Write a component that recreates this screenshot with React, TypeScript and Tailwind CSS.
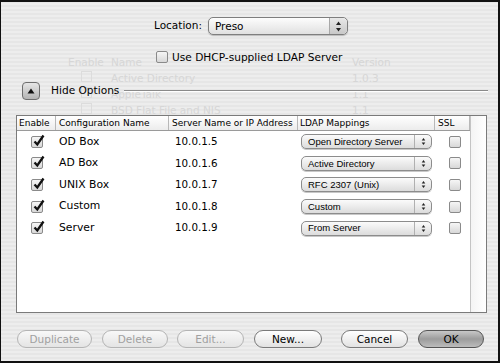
import React from "react";

const font = "font-['DejaVu_Sans','Liberation_Sans',sans-serif]";

const rows = [
  { name: "OD Box", ip: "10.0.1.5", map: "Open Directory Server" },
  { name: "AD Box", ip: "10.0.1.6", map: "Active Directory" },
  { name: "UNIX Box", ip: "10.0.1.7", map: "RFC 2307 (Unix)" },
  { name: "Custom", ip: "10.0.1.8", map: "Custom" },
  { name: "Server", ip: "10.0.1.9", map: "From Server" },
];

const Arrows = ({ size = 7 }: { size?: number }) => (
  <svg width={size} height={size + 4} viewBox="0 0 7 11">
    <path d="M3.5 0.5 L6 4 L1 4 Z" fill="#222" />
    <path d="M3.5 10.5 L6 7 L1 7 Z" fill="#222" />
  </svg>
);

const CheckBox = ({ checked }: { checked?: boolean }) => (
  <div className="relative h-[12px] w-[12px] rounded-[2px] border border-[#8a8a8a] bg-gradient-to-b from-[#f6f6f6] to-[#d8d8d8]">
    {checked && (
      <svg
        className="absolute left-[1px] top-[-3px]"
        width="12"
        height="13"
        viewBox="0 0 12 13"
      >
        <path
          d="M1.5 7.5 L4.3 10.5 L10.5 1.5"
          stroke="#111"
          strokeWidth="2.3"
          fill="none"
        />
      </svg>
    )}
  </div>
);

const MiniPopup = ({ label }: { label: string }) => (
  <div className="flex h-[15px] w-[131px] items-center rounded-[5px] border border-[#8c8c8c] bg-gradient-to-b from-[#fbfbfb] to-[#dcdcdc] shadow-[0_1px_0_#c8c8c8]">
    <span className="flex-1 whitespace-nowrap pl-[6px] font-['Liberation_Sans',sans-serif] text-[9.5px] leading-none text-black">
      {label}
    </span>
    <div className="flex h-full w-[17px] items-center justify-center border-l border-[#b0b0b0]">
      <Arrows size={5} />
    </div>
  </div>
);

const Pill = ({
  label,
  w,
  disabled,
  primary,
}: {
  label: string;
  w: string;
  disabled?: boolean;
  primary?: boolean;
}) => (
  <div
    className={`flex h-[18px] ${w} items-center justify-center whitespace-nowrap rounded-full border text-[10.5px] leading-none ${
      primary
        ? "border-[#555] bg-gradient-to-b from-[#c8c8c8] via-[#9c9c9c] to-[#bcbcbc] text-black"
        : disabled
        ? "border-[#b4b4b4] bg-gradient-to-b from-[#f8f8f8] to-[#e4e4e4] text-[#a0a0a0]"
        : "border-[#7a7a7a] bg-gradient-to-b from-[#ffffff] to-[#e2e2e2] text-black"
    }`}
  >
    {label}
  </div>
);

export default function App() {
  return (
    <div
      className={`${font} relative h-[363px] w-[500px] overflow-hidden border-t-2 border-l border-r-2 border-b-2 border-[#111] bg-[repeating-linear-gradient(0deg,#ededed_0px,#ededed_2px,#e6e6e6_2px,#e6e6e6_4px)] text-black`}
    >
      {/* faint window content behind the sheet */}
      <div className="pointer-events-none absolute left-[67px] top-[53px] w-[340px] whitespace-nowrap text-[10.5px] text-[#d6d6d6]">
        <div className="flex h-[16px] items-center">
          <span className="w-[43px]">Enable</span>
          <span className="w-[241px]">Name</span>
          <span>Version</span>
        </div>
        {["Active Directory", "AppleTalk", "BSD Flat File and NIS"].map(
          (n, i) => (
            <div key={n} className="flex h-[16px] items-center">
              <span className="w-[43px] pl-[13px]">
                <span className="inline-block h-[11px] w-[11px] border border-[#dcdcdc]" />
              </span>
              <span className="w-[241px]">{n}</span>
              <span>{i === 0 ? "1.0.3" : "1.1"}</span>
            </div>
          )
        )}
      </div>

      <div className="relative flex flex-col whitespace-nowrap">
        {/* Location */}
        <div className="mt-[15px] flex h-[18px] items-center">
          <span className="ml-[153px] mr-[6px] text-[10.5px]">Location:</span>
          <div className="flex h-[18px] w-[140px] items-center rounded-[5px] border border-[#7e7e7e] bg-gradient-to-b from-[#fdfdfd] to-[#e0e0e0] shadow-[0_1px_1px_#bbb]">
            <span className="flex-1 pl-[6px] text-[10.5px] leading-none">Preso</span>
            <div className="flex h-full w-[18px] items-center justify-center rounded-r-[5px] border-l border-[#a8a8a8] bg-gradient-to-b from-[#e8e8e8] to-[#c8c8c8]">
              <Arrows />
            </div>
          </div>
        </div>

        {/* DHCP */}
        <div className="mt-[15px] flex h-[14px] items-center">
          <div className="ml-[155px]">
            <CheckBox />
          </div>
          <span className="ml-[4px] text-[10.6px] leading-none">
            Use DHCP-supplied LDAP Server
          </span>
        </div>

        {/* Hide options */}
        <div className="mt-[18px] flex h-[18px] items-center pl-[21px] pr-[10px]">
          <div className="flex h-[18px] w-[18px] items-center justify-center rounded-[4px] border border-[#6e6e6e] bg-gradient-to-b from-[#e6e6e6] to-[#b4b4b4]">
            <svg width="8" height="6" viewBox="0 0 8 6">
              <path d="M4 0.5 L7.5 5.5 L0.5 5.5 Z" fill="#111" />
            </svg>
          </div>
          <span className="ml-[11px] text-[10.6px]">Hide Options</span>
          <div className="ml-[5px] h-[2px] flex-1 border-t border-b border-t-[#8a8a8a] border-b-white" />
        </div>

        {/* table */}
        <div className="ml-[15px] mt-[15px] flex h-[198px] w-[471px] border border-[#7a7a7a] bg-white">
          <div className="flex w-[453px] flex-col">
            <div className="flex h-[15px] border-b border-[#9a9a9a] bg-gradient-to-b from-[#ffffff] to-[#ececec] text-[9px] leading-[14px]">
              <div className="w-[39px] border-r border-[#b8b8b8] pl-[2px]">Enable</div>
              <div className="w-[113px] border-r border-[#b8b8b8] pl-[3px]">Configuration Name</div>
              <div className="w-[129px] border-r border-[#b8b8b8] pl-[3px]">Server Name or IP Address</div>
              <div className="w-[137px] border-r border-[#b8b8b8] pl-[2px]">LDAP Mappings</div>
              <div className="w-[35px] border-r border-[#b8b8b8] pl-[3px]">SSL</div>
            </div>
            {rows.map((r) => (
              <div key={r.name} className="flex h-[21.6px] items-center text-[10.8px]">
                <div className="flex w-[39px] justify-center pl-[1px]">
                  <CheckBox checked />
                </div>
                <div className="w-[113px] pl-[3px]">{r.name}</div>
                <div className="w-[129px] pl-[6px] text-[10.3px]">{r.ip}</div>
                <div className="w-[137px] pl-[3px]">
                  <MiniPopup label={r.map} />
                </div>
                <div className="flex w-[35px] justify-center pl-[4px]">
                  <CheckBox />
                </div>
              </div>
            ))}
          </div>
          <div className="flex-1 border-l border-[#c4c4c4] bg-gradient-to-r from-[#f4f4f4] to-[#ffffff]" />
        </div>

        {/* buttons */}
        <div className="ml-[16px] mt-[17px] flex items-center">
          <Pill label="Duplicate" w="w-[75px]" disabled />
          <div className="w-[10px]" />
          <Pill label="Delete" w="w-[66px]" disabled />
          <div className="w-[9px]" />
          <Pill label="Edit..." w="w-[67px]" disabled />
          <div className="w-[10px]" />
          <Pill label="New..." w="w-[68px]" />
          <div className="w-[19px]" />
          <Pill label="Cancel" w="w-[67px]" />
          <div className="w-[10px]" />
          <Pill label="OK" w="w-[66px]" primary />
        </div>
      </div>
    </div>
  );
}
